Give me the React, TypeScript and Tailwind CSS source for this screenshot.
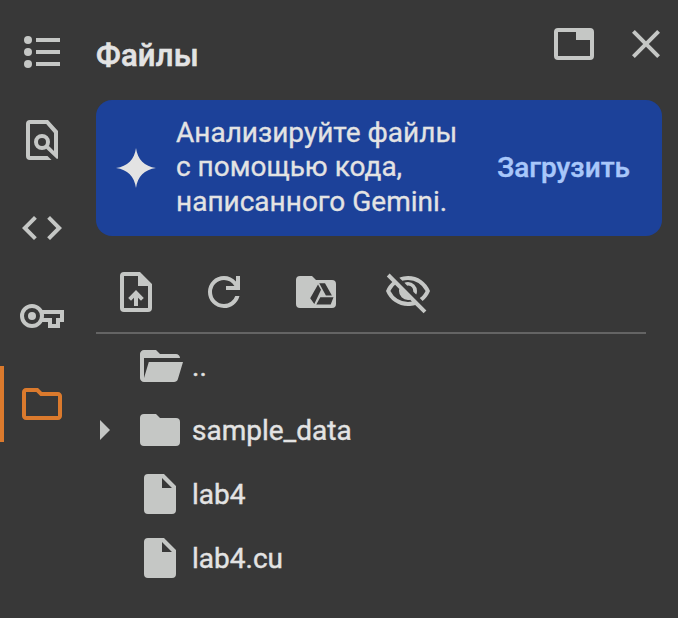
import type { ReactNode } from "react";

function Icon({ children, className = "" }: { children: ReactNode; className?: string }) {
  return (
    <svg viewBox="0 0 48 48" className={`block size-12 shrink-0 ${className}`} fill="currentColor" aria-hidden="true">
      {children}
    </svg>
  );
}

function ListIcon() {
  return (
    <Icon>
      <circle cx="10" cy="12" r="4" />
      <circle cx="10" cy="24" r="4" />
      <circle cx="10" cy="36" r="4" />
      <path d="M18 10h24v4H18zM18 22h24v4H18zM18 34h24v4H18z" />
    </Icon>
  );
}

function FindIcon() {
  return (
    <Icon>
      <path
        d="M29.500 40 33.500 44H12q-4 0-4-4V8q0-4 4-4h18l10 11v27q0 1-1 1L27.900 32.600 30.700 29.800 36 35V17L28.200 8H12v32z"
      />
      <circle cx="24" cy="26" r="6" fill="none" stroke="currentColor" strokeWidth="4" />
    </Icon>
  );
}

function CodeIcon() {
  return (
    <Icon>
      <path transform="scale(2)" d="M8 18 2 12l6-6 1.425 1.425-4.600 4.600L9.400 16.600 8 18Zm8 0-1.425-1.425 4.600-4.600L14.600 7.400 16 6l6 6-6 6Z" />
    </Icon>
  );
}

function KeyIcon() {
  return (
    <Icon>
      <circle cx="14" cy="24" r="10" fill="none" stroke="currentColor" strokeWidth="4" />
      <circle cx="14" cy="24" r="4" />
      <path d="M23 20h21v8h-4v6h-8v-6h-9" fill="none" stroke="currentColor" strokeWidth="4" />
    </Icon>
  );
}

function FolderOutlineIcon() {
  return (
    <Icon>
      <path
        transform="scale(2)"
        d="M20 6h-8l-2-2H4c-1.100 0-2 .9-2 2v12c0 1.100.9 2 2 2h16c1.100 0 2-.9 2-2V8c0-1.100-.9-2-2-2zm0 12H4V6h5.170l2 2H20z"
      />
    </Icon>
  );
}

function TabIcon() {
  return (
    <Icon>
      <rect x="6" y="10" width="36" height="28" rx="2" fill="none" stroke="currentColor" strokeWidth="4" />
      <path d="M26 10h16v10H26z" />
    </Icon>
  );
}

function CloseIcon() {
  return (
    <Icon>
      <path transform="scale(2)" d="M19 6.410 17.590 5 12 10.590 6.410 5 5 6.410 10.590 12 5 17.590 6.410 19 12 13.410 17.590 19 19 17.590 13.410 12z" />
    </Icon>
  );
}

function UploadIcon() {
  return (
    <Icon>
      <path fillRule="evenodd" d="M12 4h16l12 12v24q0 4-4 4H12q-4 0-4-4V8q0-4 4-4zm0 4v32h24V18H26V8z" />
      <path d="M22 38V29.700l-3 3-2.800-2.800L24 22l7.800 7.900-2.800 2.800-3-3V38z" />
    </Icon>
  );
}

function RefreshIcon() {
  return (
    <Icon>
      <path
        transform="scale(2)"
        d="M12 20q-3.350 0-5.675-2.325T4 12q0-3.350 2.325-5.675T12 4q1.725 0 3.300.712T18 6.750V4h2v7h-7V9h4.200q-.8-1.400-2.187-2.200T12 6Q9.500 6 7.750 7.750T6 12q0 2.500 1.750 4.250T12 18q1.925 0 3.475-1.100T17.650 14h2.100q-.7 2.650-2.850 4.325T12 20Z"
      />
    </Icon>
  );
}

function DriveIcon() {
  return (
    <Icon>
      <path d="M8 8h12l4 4h16q4 0 4 4v20q0 4-4 4H8q-4 0-4-4V12q0-4 4-4z" />
      <g className="text-[#383838]" fill="currentColor">
        <path d="M27.200 15.300h5.800l6.900 12.300h-6zM26 16.500l3 5.200-6.700 14.300-4.100-5.800zM28.300 29.300h13.200l-2.800 7.200H24.300z" />
      </g>
    </Icon>
  );
}

function EyeOffIcon() {
  return (
    <Icon>
      <path
        transform="scale(2)"
        d="m16.100 13.300-1.450-1.450q.225-1.175-.675-2.200t-2.325-.8L10.200 7.400q.425-.2.863-.3T12 7q1.875 0 3.188 1.313T16.500 11.500q0 .5-.1.938t-.3.862Zm3.200 3.150-1.450-1.400q.95-.725 1.688-1.587T20.800 11.500q-1.250-2.525-3.588-4.012T12 6q-.725 0-1.425.1T9.200 6.400L7.650 4.850q1.025-.425 2.100-.638T12 4q3.775 0 6.725 2.087T23 11.500q-.575 1.475-1.512 2.738T19.300 16.450Zm.5 6.150-4.200-4.150q-.875.275-1.762.413T12 19q-3.775 0-6.725-2.087T1 11.500q.525-1.325 1.325-2.463T4.150 7L1.400 4.200l1.400-1.400 18.400 18.400-1.400 1.400ZM5.550 8.400q-.725.650-1.325 1.425T3.200 11.500q1.250 2.525 3.588 4.012T12 17q.5 0 .975-.063t.975-.137l-.9-.95q-.275.075-.525.113T12 16q-1.875 0-3.188-1.313T7.500 11.500q0-.275.038-.525t.112-.525L5.550 8.400Z"
      />
    </Icon>
  );
}

function FolderOpenIcon() {
  return (
    <Icon>
      <path
        transform="scale(2)"
        d="M4 20q-.825 0-1.412-.587T2 18V6q0-.825.588-1.412T4 4h6l2 2h8q.825 0 1.413.588T22 8H4v10l2.400-8h17.100l-2.575 8.575q-.2.650-.737 1.038T19 20H4Z"
      />
    </Icon>
  );
}

function FolderIcon() {
  return (
    <Icon>
      <path d="M8 8h12l4 4h16q4 0 4 4v20q0 4-4 4H8q-4 0-4-4V12q0-4 4-4z" />
    </Icon>
  );
}

function FileIcon() {
  return (
    <Icon>
      <path fillRule="evenodd" d="M12 4h16l12 12v24q0 4-4 4H12q-4 0-4-4V8q0-4 4-4zm14 4v10h10z" />
    </Icon>
  );
}

function SparkIcon() {
  return (
    <Icon className="text-[#e3e3e3]">
      <path d="M24 4C25.500 15.500 32.500 22.500 44 24 32.500 25.500 25.500 32.500 24 44 22.500 32.500 15.500 25.500 4 24 15.500 22.500 22.500 15.500 24 4z" />
    </Icon>
  );
}

function Row({ icon, label, expandable = false }: { icon: ReactNode; label: string; expandable?: boolean }) {
  return (
    <div className="flex h-16 items-center">
      <div className="w-10 pl-1">
        {expandable && (
          <svg viewBox="0 0 10 20" className="block h-5 w-2.5" fill="currentColor" aria-hidden="true">
            <path d="M0 0 10 10 0 20z" />
          </svg>
        )}
      </div>
      {icon}
      <span className="ml-2 pt-px text-[28px] leading-8 text-[#e3e3e3] [-webkit-text-stroke:0.4px_#e3e3e3]">{label}</span>
    </div>
  );
}

export default function App() {
  return (
    <div className="flex h-[618px] w-[678px] overflow-hidden bg-[#383838] font-['Roboto','Liberation_Sans',sans-serif] text-[#c5c7c5]">
      <nav className="flex w-24 shrink-0 flex-col pt-[14px]">
        {[<ListIcon />, <FindIcon />, <CodeIcon />, <KeyIcon />].map((icon, i) => (
          <div key={i} className="mb-3 flex h-[76px] items-center pl-[18px]">{icon}</div>
        ))}
        <div className="flex h-[76px] items-center border-l-4 border-[#db7a2d] pl-[14px] text-[#db7a2d]">
          <FolderOutlineIcon />
        </div>
      </nav>
      <main className="flex w-[566px] shrink-0 flex-col">
        <header className="flex h-[100px] items-start pt-5">
          <h1 className="mt-[17px] text-[31px] leading-[38px] font-medium tracking-[0.2px] text-[#e3e3e3] [-webkit-text-stroke:0.6px_#e3e3e3]">Файлы</h1>
          <div className="-mr-2 ml-auto flex gap-6">
            <TabIcon />
            <CloseIcon />
          </div>
        </header>
        <section className="flex h-[136px] items-center rounded-[16px] bg-[#1c4199] pr-8 pl-4">
          <SparkIcon />
          <p className="ml-4 pb-[0.8px] text-[28px] leading-[34.5px] whitespace-nowrap text-[#e3e3e3] [-webkit-text-stroke:0.3px_#e3e3e3]">
            Анализируйте файлы<br />с помощью кода,<br />написанного Gemini.
          </p>
          <button className="ml-auto text-[28px] leading-9 font-medium text-[#a8c7fa] [-webkit-text-stroke:0.4px_#a8c7fa]">Загрузить</button>
        </section>
        <div className="mt-8 mr-4 flex h-[66px] gap-10 border-b-2 border-[#646464] pl-4">
          <UploadIcon />
          <RefreshIcon />
          <div className="ml-1">
            <DriveIcon />
          </div>
          <div className="ml-1">
            <EyeOffIcon />
          </div>
        </div>
        <div>
          <Row icon={<FolderOpenIcon />} label=".." />
          <Row icon={<FolderIcon />} label="sample_data" expandable />
          <Row icon={<FileIcon />} label="lab4" />
          <Row icon={<FileIcon />} label="lab4.cu" />
        </div>
      </main>
    </div>
  );
}
